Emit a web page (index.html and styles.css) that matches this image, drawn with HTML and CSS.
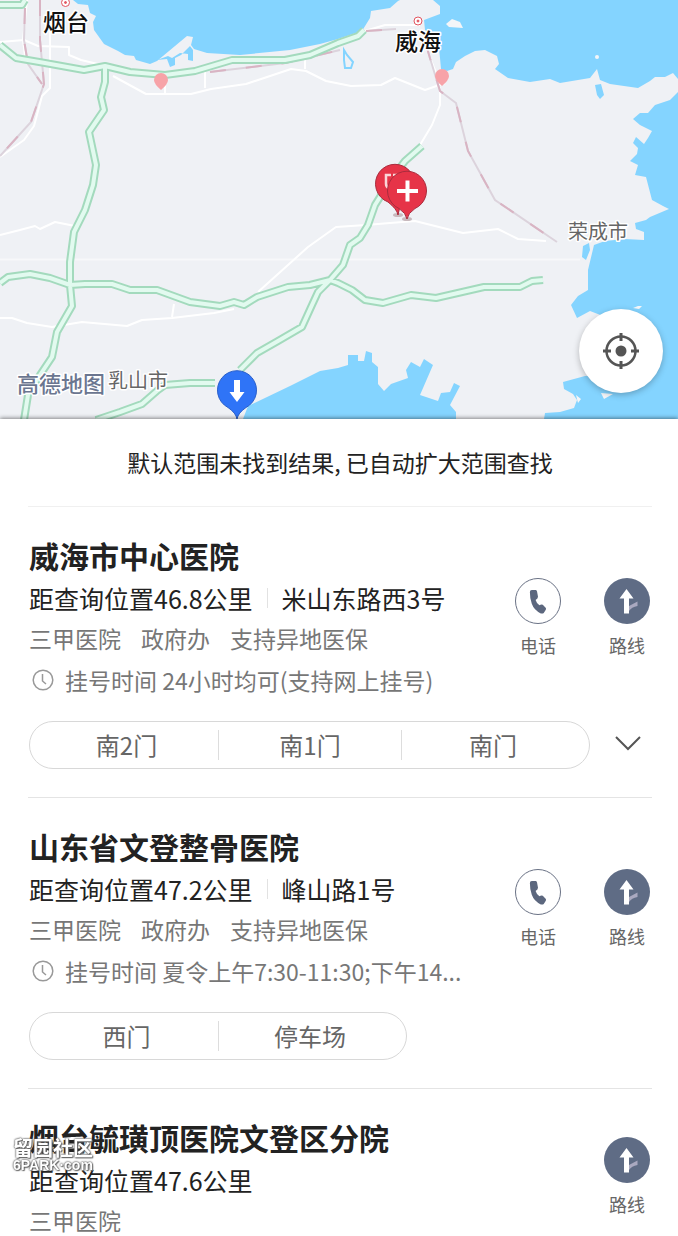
FILE: index.html
```
<!DOCTYPE html>
<html lang="zh-CN">
	<head>
		<meta charset="UTF-8">
		<meta name="viewport" content="width=device-width,initial-scale=1.0">
		<title>医院查询</title>
		<link rel="stylesheet" href="styles.css">
	</head>
	<body>
		<!-- shared icons -->
		<svg class="sprite" aria-hidden="true">
			<symbol id="icoPhone" viewBox="0 0 46 46">
				<path d="M14.500 13.500Q14.500 11.500 16.500 11.500H20.500Q21.500 11.500 22 13L23 18.500Q23 20.500 20.500 22Q21.500 25.500 24.500 27.500Q26.500 26 28 27L31 30Q32 31 31 32.500L29 35.500Q28 36.500 26 36Q19 33 16.500 26Q14.500 20.500 14.500 13.500Z" fill="#5c677e"/>
			</symbol>
			<symbol id="icoRoute" viewBox="0 0 46 46">
				<path d="M25 28l8.500-4.500v4.500q-6 1-8.500 5z" fill="#aaa9c0"/>
				<path d="M22.500 11l7 9.500H25V35.500h-5V20.500h-4.500z" fill="#fff"/>
			</symbol>
			<symbol id="icoClock" viewBox="0 0 22 22">
				<circle cx="11" cy="11" r="9.800"/>
				<path d="M10.500 5v7l3.500 3"/>
			</symbol>
		</svg>
		<div class="app">
			<div class="map">
				<svg class="mapArt" viewBox="0 0 678 419">
					<rect width="678" height="419" fill="#eff1f5"/>
					<g fill="#84d4ff">
						<path d="M73 0L78 4L88 5L90 13L96 16L93 22L94 30L104 44L118 51L125 55L134 56L136 60L150 64L157 61L175 46L187 36L193 37L191 45L194 49L207 53L240 55L290 50L320 44L338 39L362 31L370 18L371 11L390 8L398 1L400 0Z"/>
						<path d="M433 0L440 6L440 14L424 20L425 30L438 40L440 58L441 69L447 71L453 69L456 62L465 56L475 51L485 50L497 56L499 64L495 69L508 78L530 82L550 79L560 83L590 78L597 69L600 80L610 84L638 88L650 81L655 77L665 77L673 73L678 79V0Z"/>
						<path d="M678 92L670 100L655 105L648 113L640 113L633 119L640 125L652 131L648 138L644 144L636 137L633 143L638 148L637 154L630 161L638 165L635 175L646 177L652 200L663 206L669 209L650 217L646 220L635 223L636 229L644 232L644 240L625 239L605 241L594 245L588 270L588 290L578 296L571 305L577 318L590 311L603 316V376L585 376L563 382L564 389L573 394L577 400L574 408L560 412L545 413L544 419H678Z"/>
						<path d="M243 419L248 406L290 386L320 371L338 368L348 365L348 355H358V361H364L366 351L372 353V362L378 367V384L384 391L391 384L408 378L406 370L411 362L420 367L424 359L433 365L420 395L438 401L441 393L450 392L454 383L460 386L450 405L456 412V419Z"/>
						<path d="M157 60L167 59L170 67L175 65L175 58L181 55L190 46L193 50V61L188 60V54L180 53L172 58L168 56Z"/>
						<path d="M595 85L601 84L604 95L600 99L597 95ZM583 246L589 243L590 250L586 260L582 257Z"/>
					</g>
					<g fill="#f4f5f8">
						<path d="M446 24l6-5 8 3 3 6-14-1z"/>
						<circle cx="597" cy="57" r="2"/>
						<path d="M633 308l5-2h4l-3 3zM601 393l12 1-9 5zM576 395l5 4-3 4z"/>
					</g>
					<path class="lake" d="M344 50l3 5 6 7-2 6h-6l-1-8z"/>

					<g class="minor">
						<path d="M0 42l24-2 14 6 31 1v8l12 5 21 5M27 0l-4 40 2 16M50 30v58l-8 8-8 30-10 14-24 17"/>
						<path d="M113 76l33 18 45 0 20-5 35-5 45-15 15 2 20 10 25 5 30-1 14-7 30 12 20-7"/>
						<path d="M165 94v-16M205 88v-16M305 69v-10M365 31l20-6h35M427 50l8 20 5 20v15l-8 20-12 20"/>
						<path d="M0 235l20-5 15-4 5 3 15-7 20 4M258 292l50-45 28-20 30-2 24-2 25-2 48 12 35-4 20 10 28 2"/>
						<path d="M0 318l12 0 15 5 25 4 30-5 45 4 15-6 30-2 42-5 20-4M172 317l2-13"/>
						<path d="M0 259.500h580" opacity=".5"/>
					</g>
					<g class="rail">
						<path d="M40 0v40l4 44-13 38-31 34M25 8l-1 32 4 24 14 20"/>
						<path d="M210 72l75-9 55-13M366 31l30-2"/>
						<path d="M426 45l14 46 16 12 12 48 27 49 62 42"/>
					</g>
					<g class="railDash">
						<path d="M40 0v40l4 44-13 38-31 34M25 8l-1 32 4 24 14 20"/>
						<path d="M210 72l75-9 55-13M366 31l30-2"/>
						<path d="M426 45l14 46 16 12 12 48 27 49 62 42"/>
					</g>

					<!-- highways, green casing below and mint fill on top -->
					<defs>
						<path id="highways" d="M0 5h22l3-5M0 45l16 13 29 5 39 7 21-4 25 6 35 3 30-4 37-11h53l25-5 28-12 20-7 6-6M105 68v14l-4 15 3 13-15 22 7 33-3 20-8 25-11 22-4 30v23l2 21-15 26-5 25-12 18-12 20-4 25M0 283l8-6 22-3 20 4 20 7 15-1h27l18 6h27l33 12 30 4 14-4 10 3 13-8 31-10 22-2 20-5 8 3 14 7 13 10 18 3 28-8 25 3 48-11h36l12-6 11-1M422 146l-17 15-13 17-17 27-7 20-8 13-10 7-7 20-13 15-12 12-6 13-10 22-24 14-21 12-17 17M215 383l-25 0-25 2-7 5-16 14-22 8-24 8"/>
					</defs>
					<use href="#highways" class="casing"/>
					<use href="#highways" class="fill"/>

					<g fill="#f7a3a8">
						<path d="M161 90q-7-6-7-10a7 7 0 0 1 14 0q0 4-7 10z"/>
						<path d="M442 86q-7-6-7-10a7 7 0 0 1 14 0q0 4-7 10z"/>
					</g>
					<g class="cityDot">
						<circle cx="65.500" cy="2.500" r="4"/><circle cx="65.500" cy="2.500" r="1"/>
						<circle cx="418" cy="21" r="4"/><circle cx="418" cy="21" r="1"/>
					</g>

					<text class="city" x="43" y="31">烟台</text>
					<text class="city" x="395" y="50">威海</text>
					<text class="county" x="568" y="239">荣成市</text>
					<text class="county" x="108" y="388">乳山市</text>
					<text class="brand" x="17" y="392">高德地图</text>

					<!-- result pins -->
					<ellipse cx="398" cy="215" rx="5" ry="2" fill="#c8b9bd"/>
					<ellipse cx="407" cy="219" rx="5" ry="2" fill="#c8b9bd"/>
					<path class="redPin" d="M398 215q-1-6-10-13a19.500 19.500 0 1 1 14 0q-3 6-4 13z"/>
					<path d="M391 175h-5v9q0 3 3 4M393 175h5" fill="none" stroke="#fbd5d8" stroke-width="2.500"/>
					<path class="redPin" d="M407 219q-1-6-8-10.500a19.500 19.500 0 1 1 16 0q-7 4.500-8 10.500z"/>
					<path d="M397 191h21M407.500 180.500v21" fill="none" stroke="#fff" stroke-width="4"/>

					<path d="M237 419q-1-6-9-11.500a19.500 19.500 0 1 1 18 0q-8 5.500-9 11.500z" fill="#2f74f7" stroke="#2a5fc9"/>
					<path d="M234 380h6v12h4.500l-7.500 10-7.500-10h4.500z" fill="#fff"/>
				</svg>
				<button class="locate" type="button" aria-label="定位">
					<svg width="38" height="38" viewBox="0 0 38 38" fill="none" stroke="#555" stroke-width="3">
						<circle cx="19" cy="19" r="14.500" stroke-width="2.500"/>
						<path d="M19 1v8M19 29v8M1 19h8M29 19h8"/>
						<circle cx="19" cy="19" r="5.500" fill="#555" stroke="none"/>
					</svg>
				</button>
			</div>

			<main class="results">
				<p class="notice">默认范围未找到结果, 已自动扩大范围查找</p>

				<section class="item">
					<div class="body">
						<div class="details">
							<h2>威海市中心医院</h2>
							<p class="place"><span>距查询位置46.8公里</span><span class="address">米山东路西3号</span></p>
							<p class="tags"><span>三甲医院</span><span>政府办</span><span>支持异地医保</span></p>
							<p class="hours"><svg><use href="#icoClock"/></svg>挂号时间 24小时均可(支持网上挂号)</p>
						</div>
						<div class="actions">
							<button class="action" type="button"><svg class="phone"><use href="#icoPhone"/></svg>电话</button>
							<button class="action" type="button"><svg class="route"><use href="#icoRoute"/></svg>路线</button>
						</div>
					</div>
					<div class="gateRow">
						<div class="gates">
							<button type="button">南2门</button>
							<button type="button">南1门</button>
							<button type="button">南门</button>
						</div>
						<button class="more" type="button" aria-label="展开">
							<svg width="26" height="16" viewBox="0 0 26 16"><path d="M1 2l12 12L25 2" fill="none" stroke="#555" stroke-width="2"/></svg>
						</button>
					</div>
				</section>

				<section class="item">
					<div class="body">
						<div class="details">
							<h2>山东省文登整骨医院</h2>
							<p class="place"><span>距查询位置47.2公里</span><span class="address">峰山路1号</span></p>
							<p class="tags"><span>三甲医院</span><span>政府办</span><span>支持异地医保</span></p>
							<p class="hours"><svg><use href="#icoClock"/></svg>挂号时间 夏令上午7:30-11:30;下午14...</p>
						</div>
						<div class="actions">
							<button class="action" type="button"><svg class="phone"><use href="#icoPhone"/></svg>电话</button>
							<button class="action" type="button"><svg class="route"><use href="#icoRoute"/></svg>路线</button>
						</div>
					</div>
					<div class="gateRow">
						<div class="gates">
							<button type="button">西门</button>
							<button type="button">停车场</button>
						</div>
					</div>
				</section>

				<section class="item">
					<div class="body">
						<div class="details">
							<h2>烟台毓璜顶医院文登区分院</h2>
							<p class="place"><span>距查询位置47.6公里</span></p>
							<p class="tags"><span>三甲医院</span></p>
						</div>
						<div class="actions">
							<button class="action" type="button"><svg class="route"><use href="#icoRoute"/></svg>路线</button>
						</div>
					</div>
				</section>
			</main>

			<div class="watermark"><span>留园社区</span><b>6PARK·com</b></div>
		</div>
	</body>
</html>
```
FILE: styles.css
```
*{box-sizing:border-box;}
body{margin:0;background:#fff;color:#222;font-family:"Noto Sans CJK SC","Noto Sans",sans-serif;}
h2,p{margin:0;}
button{padding:0;border:0;background:none;color:inherit;font-family:inherit;cursor:pointer;}
.sprite{position:absolute;width:0;height:0;}

.app{position:relative;display:flex;flex-direction:column;height:100vh;overflow:hidden;}

/* map */
.map{position:relative;flex:none;}
.mapArt{display:block;width:100%;height:auto;}
.mapArt .minor{fill:none;stroke:#fff;stroke-width:2;stroke-linejoin:round;}
.mapArt .rail{fill:none;stroke:#dcd3dc;stroke-width:2;}
.mapArt .railDash{fill:none;stroke:#d9b4c3;stroke-width:2;stroke-dasharray:16 20;}
.mapArt .casing{fill:none;stroke:#a3dabd;stroke-width:8;stroke-linejoin:round;}
.mapArt .fill{fill:none;stroke:#e2faef;stroke-width:4;stroke-linejoin:round;}
.mapArt .lake{fill:none;stroke:#84d4ff;stroke-width:2;}
.mapArt .cityDot{fill:#e25560;stroke:#e25560;}
.mapArt .cityDot circle:nth-child(odd){fill:#fff;}
.mapArt .redPin{fill:#e63448;stroke:#a92c3d;}
.mapArt text{paint-order:stroke;stroke:#fff;stroke-width:3px;stroke-linejoin:round;}
.mapArt .city{font-size:23px;font-weight:500;fill:#111;}
.mapArt .county{font-size:20px;fill:#666;}
.mapArt .brand{font-size:22px;font-weight:500;fill:#6b7690;}
.locate{position:absolute;right:15px;bottom:26px;display:grid;place-items:center;width:84px;height:84px;border-radius:50%;background:#fff;box-shadow:0 2px 6px rgba(0,0,0,.25);}

/* result list */
.results{position:relative;flex:1;min-height:0;padding:0 26px 0 28px;overflow-y:auto;scrollbar-width:none;background:#fff;box-shadow:0 -1px 4px rgba(0,0,0,.45);}
.notice{padding:28px 0;border-bottom:1px solid #f0f0f0;font-size:23px;line-height:31px;text-align:center;}
.item{padding:26px 2px 28px 1px;}
.item + .item{border-top:1px solid #e4e4e4;}
.body{display:flex;align-items:center;justify-content:space-between;}
.details{min-width:0;white-space:nowrap;}
.details h2{font-size:30px;line-height:44px;font-weight:700;}
.place{font-size:25px;line-height:42px;}
.address{margin-left:14px;padding-left:15px;background:linear-gradient(#e2e2e2,#e2e2e2) left center/1px 20px no-repeat;}
.tags{display:flex;gap:20px;padding:6px 0;color:#777;font-size:23px;line-height:26px;}
.hours{display:flex;align-items:center;gap:11px;padding-left:3px;color:#777;font-size:23px;line-height:46px;white-space:pre;}
.hours svg{width:22px;height:22px;fill:none;stroke:#999;stroke-width:1.5;}

.actions{display:flex;flex:none;gap:43px;}
.action{display:flex;flex-direction:column;align-items:center;gap:8px;width:46px;color:#666;font-size:18px;line-height:26px;}
.action svg{width:46px;height:46px;border-radius:50%;}
.phone{border:1px solid #6a7285;}
.route{background:#5f6c85;}

.gateRow{display:flex;align-items:center;justify-content:space-between;margin-top:18px;}
.gates{display:flex;align-items:center;height:48px;padding:0 5px;border:1px solid #d8d8d8;border-radius:24px;}
.gates button{flex:0 1 183px;width:183px;height:30px;color:#666;font-size:24px;line-height:30px;}
.gates button + button{border-left:1px solid #ddd;}
.more{margin-right:9px;height:26px;}

.watermark{position:absolute;left:13px;bottom:64px;display:flex;flex-direction:column;color:#fff;text-shadow:0 0 2px #555,0 0 2px #555,1px 1px 1px #777;pointer-events:none;}
.watermark span{font-size:20px;line-height:20px;font-weight:700;}
.watermark b{font-family:"Liberation Sans",sans-serif;font-size:14px;line-height:14px;}
```
